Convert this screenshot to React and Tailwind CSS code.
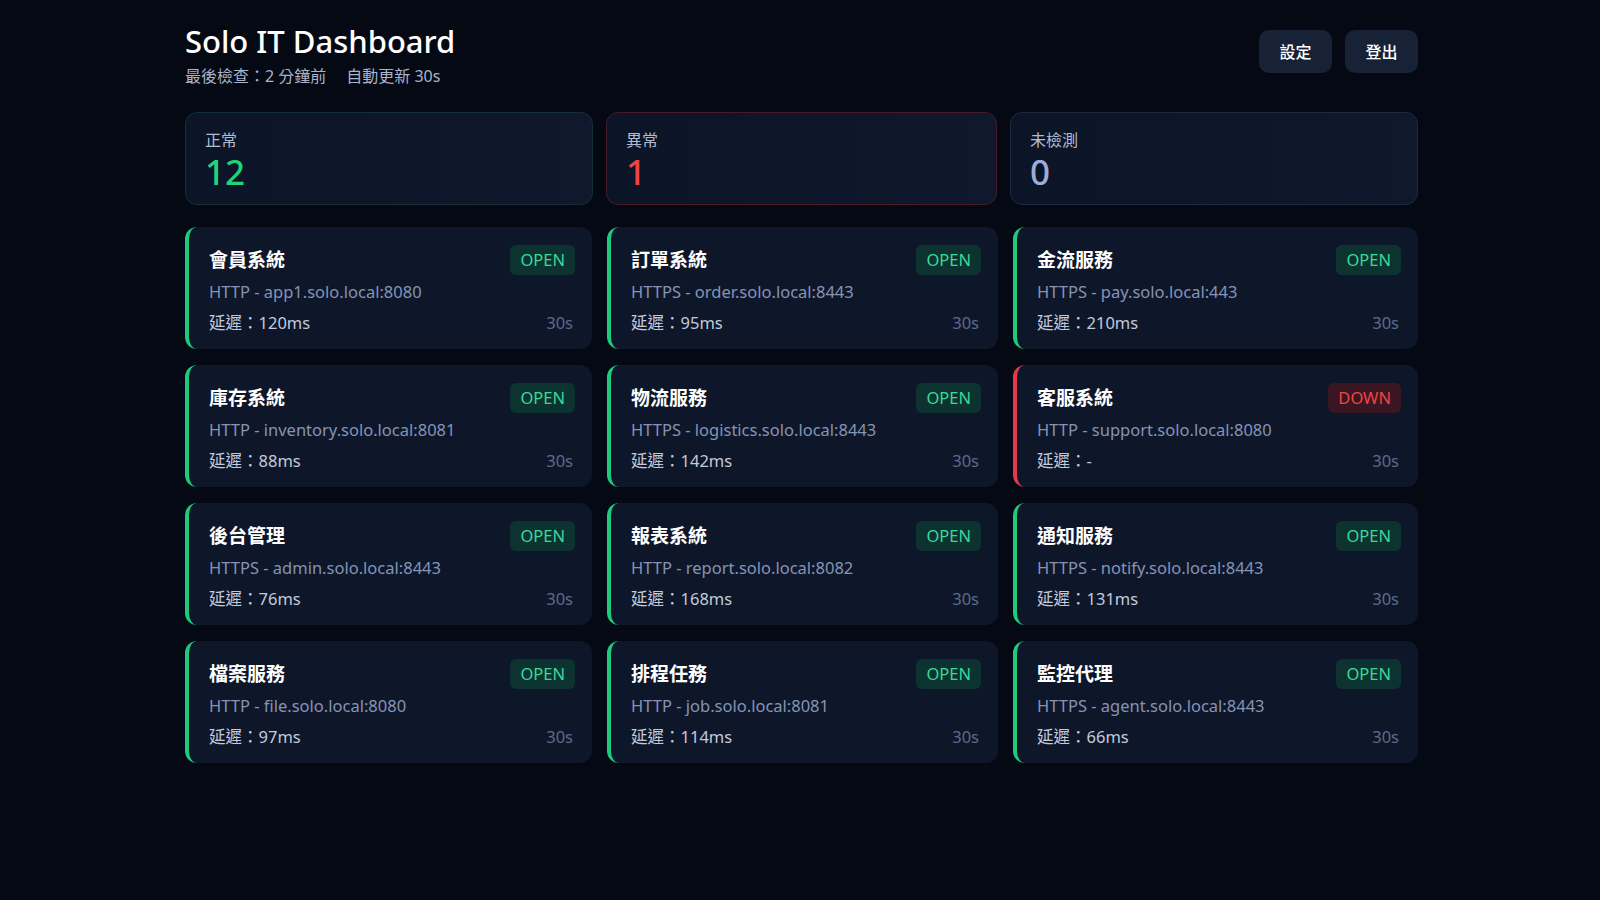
import React from 'react';

const services = [
  { name: '會員系統', target: 'HTTP - app1.solo.local:8080', latency: '120ms', up: true },
  { name: '訂單系統', target: 'HTTPS - order.solo.local:8443', latency: '95ms', up: true },
  { name: '金流服務', target: 'HTTPS - pay.solo.local:443', latency: '210ms', up: true },
  { name: '庫存系統', target: 'HTTP - inventory.solo.local:8081', latency: '88ms', up: true },
  { name: '物流服務', target: 'HTTPS - logistics.solo.local:8443', latency: '142ms', up: true },
  { name: '客服系統', target: 'HTTP - support.solo.local:8080', latency: '-', up: false },
  { name: '後台管理', target: 'HTTPS - admin.solo.local:8443', latency: '76ms', up: true },
  { name: '報表系統', target: 'HTTP - report.solo.local:8082', latency: '168ms', up: true },
  { name: '通知服務', target: 'HTTPS - notify.solo.local:8443', latency: '131ms', up: true },
  { name: '檔案服務', target: 'HTTP - file.solo.local:8080', latency: '97ms', up: true },
  { name: '排程任務', target: 'HTTP - job.solo.local:8081', latency: '114ms', up: true },
  { name: '監控代理', target: 'HTTPS - agent.solo.local:8443', latency: '66ms', up: true },
];

const font = { fontFamily: '"Noto Sans", "Noto Sans CJK TC", sans-serif' };

const StatCard = ({ label, value, border, color }) => (
  <div className={`h-[93px] rounded-xl border bg-gradient-to-r from-[#0c1427] to-[#0f182c] pt-[15px] px-[19px] ${border}`}>
    <div className="text-[16px] leading-[24px] text-[#b3bccf]">{label}</div>
    <div className={`text-[35px] leading-[40px] font-medium ${color}`}>{value}</div>
  </div>
);

const ServiceCard = ({ s }) => (
  <div
    className={`h-[122px] rounded-xl border-l-4 bg-[#0e172a] pl-[20px] pr-[17px] pt-[18px] ${
      s.up ? 'border-[#1fca7c]' : 'border-[#e5394a]'
    }`}
  >
    <div className="flex items-center justify-between h-[30px]">
      <span className="text-[19px] font-semibold text-white">{s.name}</span>
      {s.up ? (
        <span className="h-[30px] px-[10px] rounded-md bg-[#0d3330] text-[#3ad89a] text-[16.5px] leading-[30px]">OPEN</span>
      ) : (
        <span className="h-[30px] px-[10px] rounded-md bg-[#3a1622] text-[#ef4444] text-[16.5px] leading-[30px]">DOWN</span>
      )}
    </div>
    <div className="mt-[5px] text-[16.5px] leading-[24px] text-[#8593b5]">{s.target}</div>
    <div className="mt-[7px] flex justify-between text-[16.5px] leading-[24px]">
      <span className="text-[#c3cadb]">延遲：{s.latency}</span>
      <span className="text-[#5d6a88] pr-[2px]">30s</span>
    </div>
  </div>
);

export default function App() {
  return (
    <div className="min-h-screen w-full bg-[#050914] flex justify-center pl-[3px]" style={font}>
      <div className="w-[1233px] pt-[20px]">
        <div className="flex justify-between items-start">
          <div>
            <h1 className="text-[31px] leading-[42px] font-medium text-white">Solo IT Dashboard</h1>
            <div className="mt-[3px] text-[16px] leading-[22px] text-[#a9b3c9] flex gap-[20px]">
              <span>最後檢查：2 分鐘前</span>
              <span>自動更新 30s</span>
            </div>
          </div>
          <div className="flex gap-[13px] mt-[10px]">
            <button className="w-[73px] h-[43px] rounded-[10px] bg-[#172236] text-white text-[16px] font-medium">設定</button>
            <button className="w-[73px] h-[43px] rounded-[10px] bg-[#172236] text-white text-[16px] font-medium">登出</button>
          </div>
        </div>

        <div className="mt-[25px] grid grid-cols-[408px_391px_408px] gap-[13px]">
          <StatCard label="正常" value="12" border="border-[#13303a]" color="text-[#22d37a]" />
          <StatCard label="異常" value="1" border="border-[#4a1a28]" color="text-[#ef4444]" />
          <StatCard label="未檢測" value="0" border="border-[#1e2a40]" color="text-[#9facd6]" />
        </div>

        <div className="mt-[22px] grid grid-cols-[407px_391px_405px] gap-x-[15px] gap-y-[16px]">
          {services.map((s) => (
            <ServiceCard key={s.name} s={s} />
          ))}
        </div>
      </div>
    </div>
  );
}
